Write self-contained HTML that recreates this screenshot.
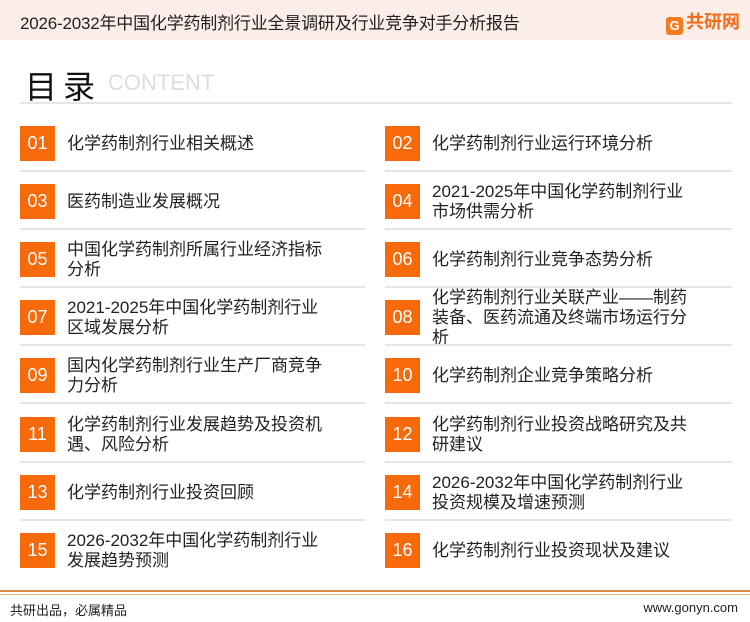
<!DOCTYPE html><html><head><meta charset="utf-8"><style>
body{margin:0;width:750px;height:622px;background:#fff;font-family:"Liberation Sans","Noto Sans CJK SC",sans-serif;position:relative;overflow:hidden}
.hd{position:absolute;left:0;top:0;width:750px;height:40px;background:#fbeee8}
.ht{position:absolute;left:20px;top:9px;font-size:17px;color:#222;letter-spacing:-0.2px}
.logo{position:absolute;left:666px;top:8px;font-size:18px;font-weight:bold;color:#f26a1b}
.lg{display:inline-block;width:17px;height:18px;background:#f47b20;border-radius:3px;vertical-align:-2px;margin-right:3px;color:#fff;font-size:13px;text-align:center;line-height:18px}
.t1{position:absolute;left:25px;top:62px;font-size:32px;color:#111;letter-spacing:6px}
.t2{position:absolute;left:108px;top:70px;font-size:22px;color:#ddd}
.line{position:absolute;height:2px;background:#e6e6e6}
.box{position:absolute;width:35px;height:35px;background:#f76a0c;color:#fff;font-size:18px;text-align:center;line-height:35px}
.tx{position:absolute;font-size:17px;color:#222;line-height:20px;width:262px}
.f1{position:absolute;left:0;top:590px;width:750px;height:2px;background:#d98a4e}
.f2{position:absolute;left:0;top:594px;width:750px;height:1px;background:#e9b48a}
.ft{position:absolute;top:600px;font-size:13px;color:#222}
</style></head><body>
<div class="hd"></div><div class="ht">2026-2032年中国化学药制剂行业全景调研及行业竞争对手分析报告</div>
<div class="logo"><span class="lg">G</span>共研网</div>
<div class="t1">目录</div><div class="t2">CONTENT</div>
<div class="line" style="left:20px;top:102px;width:712px"></div>
<div id="c"></div>
<script>
var L=["化学药制剂行业相关概述","医药制造业发展概况","中国化学药制剂所属行业经济指标分析","2021-2025年中国化学药制剂行业区域发展分析","国内化学药制剂行业生产厂商竞争力分析","化学药制剂行业发展趋势及投资机遇、风险分析","化学药制剂行业投资回顾","2026-2032年中国化学药制剂行业发展趋势预测"];
var R=["化学药制剂行业运行环境分析","2021-2025年中国化学药制剂行业市场供需分析","化学药制剂行业竞争态势分析","化学药制剂行业关联产业——制药装备、医药流通及终端市场运行分析","化学药制剂企业竞争策略分析","化学药制剂行业投资战略研究及共研建议","2026-2032年中国化学药制剂行业投资规模及增速预测","化学药制剂行业投资现状及建议"];
var h="";
for(var i=0;i<8;i++){var c=144+i*58.1;
[[L[i],20,67,2*i+1],[R[i],385,432,2*i+2]].forEach(function(a){
var n=a[3]<10?"0"+a[3]:a[3];var lines=a[0].length>14?(a[0].length>28?3:2):1;
h+='<div class="box" style="left:'+a[1]+'px;top:'+(c-18)+'px">'+n+'</div>';
h+='<div class="tx" style="left:'+a[2]+'px;top:'+(c-lines*10)+'px">'+a[0]+'</div>';
if(i<7)h+='<div class="line" style="left:'+a[1]+'px;top:'+(c+26)+'px;width:'+(a[1]==20?345:347)+'px"></div>';});}
document.getElementById("c").innerHTML=h;
</script>
<div class="f1"></div><div class="f2"></div>
<div class="ft" style="left:10px">共研出品，必属精品</div>
<div class="ft" style="right:12px">www.gonyn.com</div>
</body></html>
